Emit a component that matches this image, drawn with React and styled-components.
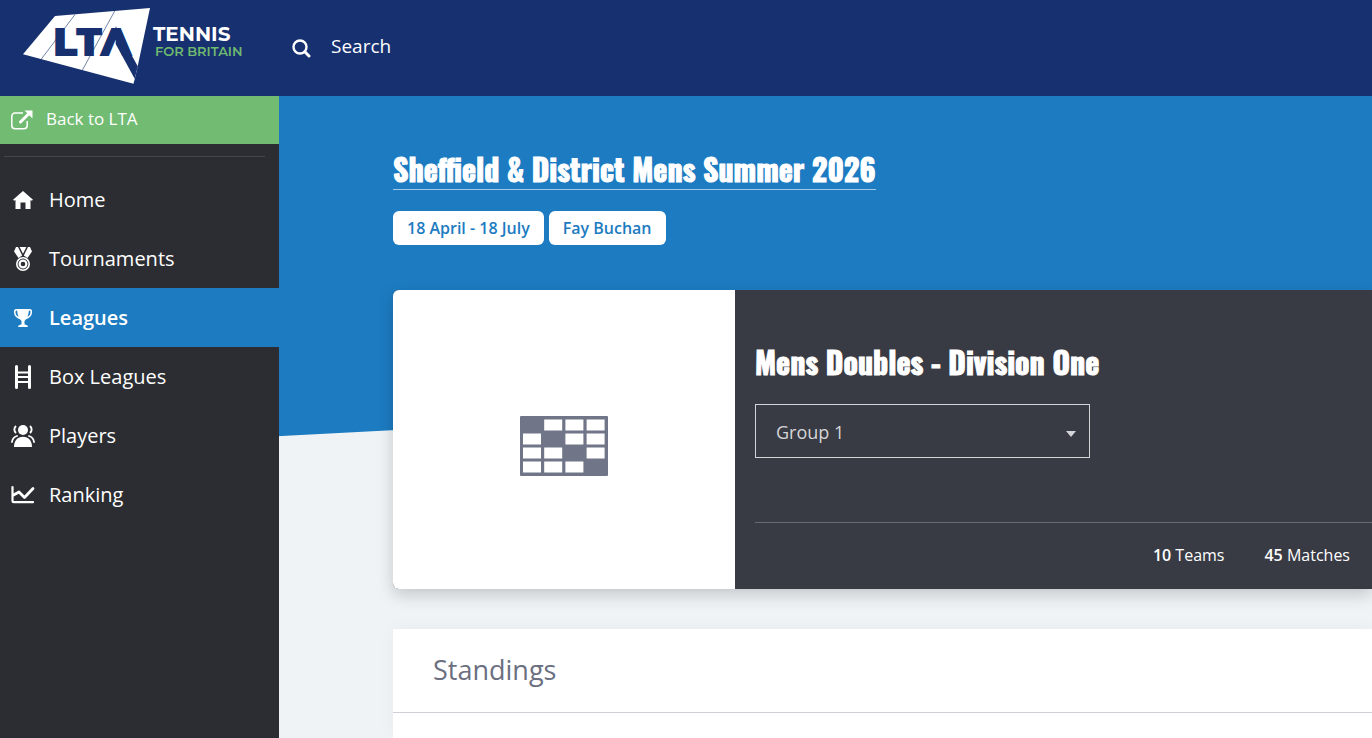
import React from "react";
import styled, { createGlobalStyle } from "styled-components";

const navItems = [
  { label: "Home", icon: HomeIcon },
  { label: "Tournaments", icon: MedalIcon },
  { label: "Leagues", icon: TrophyIcon, active: true },
  { label: "Box Leagues", icon: LadderIcon },
  { label: "Players", icon: PlayersIcon },
  { label: "Ranking", icon: ChartIcon },
];

function App() {
  return (
    <>
      <GlobalStyle />
      <Page>
        <Header>
          <LogoLink href="#" aria-label="LTA Tennis for Britain">
            <Logo />
          </LogoLink>
          <SearchButton type="button">
            <SearchIcon />
            <Label>Search</Label>
          </SearchButton>
        </Header>
        <Body>
          <Sidebar>
            <BackLink href="#">
              <ExternalIcon />
              <Label>Back to LTA</Label>
            </BackLink>
            <Divider />
            <nav>
              <NavList>
                {navItems.map(({ label, icon: Icon, active }) => (
                  <li key={label}>
                    <NavLink href="#" $active={active} aria-current={active ? "page" : undefined}>
                      <Icon />
                      {label}
                    </NavLink>
                  </li>
                ))}
              </NavList>
            </nav>
          </Sidebar>
          <Main>
            <Title>
              <TitleLink href="#">Sheffield &amp; District Mens Summer 2026</TitleLink>
            </Title>
            <Tags>
              <Tag>18 April - 18 July</Tag>
              <Tag>Fay Buchan</Tag>
            </Tags>
            <DrawCard>
              <Media>
                <GridIcon />
              </Media>
              <Details>
                <DrawTitle>Mens Doubles - Division One</DrawTitle>
                <SelectWrap>
                  <Select aria-label="Group" defaultValue="1">
                    <option value="1">Group 1</option>
                  </Select>
                  <Caret viewBox="0 0 10 6">
                    <path d="M0 0h10L5 6z" />
                  </Caret>
                </SelectWrap>
                <Stats>
                  <li>
                    <StatValue>10</StatValue> Teams
                  </li>
                  <li>
                    <StatValue>45</StatValue> Matches
                  </li>
                </Stats>
              </Details>
            </DrawCard>
            <Panel>
              <PanelTitle>Standings</PanelTitle>
            </Panel>
          </Main>
        </Body>
      </Page>
    </>
  );
}

function Logo() {
  return (
    <svg width="250" height="96" viewBox="0 0 250 96">
      <path fill="#fff" d="M23 54.3 55 16 150 8 137.7 66.3 134.8 78.7 133.5 83.7z" />
      <path fill="#17306f" d="M115.7 26 137.7 66.3 134.7 78.7 115.7 44z" />
      <g stroke="#17306f" strokeWidth="0.6">
        <path d="M75 14.5 41 59.5" />
        <path d="M114.7 11 82.3 70.3" />
      </g>
      <LogoLetters x="53" y="56">L</LogoLetters>
      <LogoLetters x="76" y="56">T</LogoLetters>
      <LogoLetters x="116" y="56" textAnchor="middle">Λ</LogoLetters>
      <LogoName x="153" y="41">TENNIS</LogoName>
      <LogoTag x="155" y="56">FOR BRITAIN</LogoTag>
    </svg>
  );
}

function SearchIcon() {
  return (
    <svg width="19" height="19" viewBox="0 0 19 19" fill="none" stroke="#fff">
      <circle cx="8" cy="8" r="6.5" strokeWidth="2.4" />
      <path d="M12.8 12.8 17 17" strokeWidth="3" strokeLinecap="round" />
    </svg>
  );
}

function ExternalIcon() {
  return (
    <svg width="22" height="20" viewBox="0 0 22 20" fill="none" stroke="#fff">
      <path d="M12 3H4A3.2 3.2 0 0 0 .8 6.2V15.5A3.2 3.2 0 0 0 4 18.7H13A3.2 3.2 0 0 0 16.2 15.5V11" strokeWidth="1.5" />
      <path d="M9.5 12 17 4.5" strokeWidth="3" strokeLinecap="round" />
      <path d="M13.5.5H21.5V8.5z" fill="#fff" stroke="none" />
    </svg>
  );
}

function HomeIcon() {
  return (
    <svg width="24" height="24" viewBox="0 0 24 24" fill="#fff">
      <path d="M12 3 22 11.8 20.8 12.8 19.5 12V21H14.5V14.5H9.5V21H4.5V12L3.2 12.8 2 11.8z" />
    </svg>
  );
}

function MedalIcon() {
  return (
    <svg width="24" height="24" viewBox="0 0 24 24" fill="none" stroke="#fff">
      <path
        fill="#fff"
        stroke="none"
        d="M5 0H7L11.2 8.6 7.5 11 3 4.5zM19 0H17L12.8 8.6 16.5 11 21 4.5zM8.6 0H15.4L12 6.8z"
      />
      <circle cx="12" cy="17" r="6.2" strokeWidth="1.6" />
      <circle cx="12" cy="17" r="3.4" strokeWidth="2.2" />
    </svg>
  );
}

function TrophyIcon() {
  return (
    <svg width="24" height="24" viewBox="0 0 24 24" fill="#fff">
      <path d="M6 3H18C17.8 8.5 16.5 12.5 13.5 15V18.3L16.8 19.8V21H7.2V19.8L10.5 18.3V15C7.5 12.5 6.2 8.5 6 3z" />
      <path
        fill="none"
        stroke="#fff"
        strokeWidth="1.6"
        d="M6.8 4.3C5 3 3.4 4 3.7 6.5 4 9.5 6.5 11.5 9 12.5M17.2 4.3C19 3 20.6 4 20.3 6.5 20 9.5 17.5 11.5 15 12.5"
      />
    </svg>
  );
}

function LadderIcon() {
  return (
    <svg width="24" height="24" viewBox="0 0 24 24" fill="none" stroke="#fff">
      <path d="M5.5 1.5V22.5M18.5 1.5V22.5" strokeWidth="3" strokeLinecap="round" />
      <path d="M5.5 7.5H18.5M5.5 12H18.5M5.5 17H18.5" strokeWidth="2" />
    </svg>
  );
}

function PlayersIcon() {
  return (
    <svg width="24" height="24" viewBox="0 0 24 24" fill="none" stroke="#fff">
      <g fill="#fff" stroke="none">
        <circle cx="12" cy="6" r="5" />
        <path d="M3 23C3 16.5 6.5 12.7 12 12.7S21 16.5 21 23z" />
      </g>
      <path strokeWidth="1.9" d="M5 2C2.8 4 2.8 7 5 9M19 2C21.2 4 21.2 7 19 9" />
      <path strokeWidth="1.8" strokeLinecap="round" d="M6 12C3 13 1.3 15 1 18M18 12C21 13 22.7 15 23 18" />
    </svg>
  );
}

function ChartIcon() {
  return (
    <svg width="24" height="24" viewBox="0 0 24 24" fill="none" stroke="#fff" strokeLinecap="round">
      <path d="M1.5 4V18Q1.5 19.2 2.7 19.2H22" strokeWidth="2.2" />
      <path d="M2.5 12 8 9 13.5 14.5 22 5.5" strokeWidth="2.8" strokeLinejoin="round" />
    </svg>
  );
}

// league grid, the diagonal cells stay filled
function GridIcon() {
  const cells = [0, 1, 2, 3];
  return (
    <svg width="90" height="62" viewBox="0 0 90 62">
      <rect x="1" y="1" width="88" height="60" rx="1" fill="#707688" />
      {cells.map((row) =>
        cells
          .filter((col) => col !== row)
          .map((col) => (
            <rect key={`${row}-${col}`} x={4 + col * 21.2} y={4.5 + row * 14} width="18" height="11" fill="#fff" />
          ))
      )}
    </svg>
  );
}

const GlobalStyle = createGlobalStyle`
  * {
    box-sizing: border-box;
  }

  body {
    margin: 0;
    overflow: hidden;
    font-family: "Open Sans", sans-serif;
    color: #fff;
    background-color: #eff3f6;
  }

  a {
    color: inherit;
    text-decoration: none;
  }

  ul {
    list-style: none;
    margin: 0;
    padding: 0;
  }

  svg {
    display: block;
    flex-shrink: 0;
  }
`;

const Page = styled.div`
  display: flex;
  flex-direction: column;
  min-height: 100vh;
`;

const Header = styled.header`
  display: flex;
  align-items: center;
  gap: 42px;
  background-color: #17306f;
`;

const LogoLink = styled.a`
  display: block;
`;

const LogoLetters = styled.text`
  font-family: Montserrat, Inter, sans-serif;
  font-size: 40px;
  font-weight: 900;
  fill: #17306f;
`;

const LogoName = styled.text`
  font-family: Montserrat, Lato, sans-serif;
  font-size: 20px;
  font-weight: 700;
  fill: #fff;
`;

const LogoTag = styled.text`
  font-family: Montserrat, Lato, sans-serif;
  font-size: 13px;
  font-weight: 600;
  fill: #6fba70;
`;

const SearchButton = styled.button`
  display: flex;
  align-items: center;
  gap: 20px;
  padding: 0;
  border: none;
  background: none;
  color: #fff;
  font-family: inherit;
  font-size: 19px;
`;

const Label = styled.span`
  padding-bottom: 4px;
`;

const Body = styled.div`
  display: flex;
  flex: 1;
`;

const Sidebar = styled.aside`
  flex: 0 0 279px;
  background-color: #2c2d32;
`;

const BackLink = styled.a`
  display: flex;
  align-items: center;
  gap: 13px;
  height: 48px;
  padding: 0 11px;
  background-color: #71bb72;
  font-size: 17px;
`;

const Divider = styled.hr`
  margin: 12px 14px 13px 4px;
  border: none;
  border-top: 1px solid #44464f;
`;

const NavList = styled.ul`
  display: flex;
  flex-direction: column;
`;

const NavLink = styled.a`
  display: flex;
  align-items: center;
  gap: 14px;
  height: 59px;
  padding: 0 11px;
  font-size: 20px;
  font-weight: ${({ $active }) => ($active ? 600 : 400)};
  background-color: ${({ $active }) => ($active ? "#1c7bc1" : "transparent")};
`;

const Main = styled.main`
  flex: 1;
  display: flex;
  flex-direction: column;
  min-width: 0;
  padding: 56px 0 0 114px;
  background: linear-gradient(177deg, #1c7bc1 50%, #eff3f6 calc(50% + 1px)) no-repeat;
  background-size: 100% 622px;
`;

const Heading = styled.h1`
  margin: 0;
  font-family: Oswald, "Roboto Condensed", sans-serif;
  font-size: 30px;
  font-weight: 700;
  line-height: 33px;
  -webkit-text-stroke: 1px #fff;
`;

const Title = styled(Heading)`
  display: flex;
`;

const TitleLink = styled.a`
  padding-bottom: 4px;
  border-bottom: 1px solid #a4cae6;
`;

const Tags = styled.div`
  display: flex;
  gap: 5px;
  margin-top: 21px;
`;

const Tag = styled.span`
  padding: 0 14px;
  border-radius: 6px;
  background-color: #fff;
  color: #1c7bc1;
  font-size: 16px;
  font-weight: 600;
  line-height: 34px;
`;

const DrawCard = styled.section`
  display: flex;
  margin-top: 45px;
  border-radius: 6px 0 0 6px;
  background-color: #393b44;
  box-shadow: 0 6px 16px rgba(0, 0, 0, 0.18);
`;

const Media = styled.div`
  display: flex;
  align-items: center;
  justify-content: center;
  flex: 0 0 342px;
  padding-top: 12px;
  border-radius: 6px 0 0 6px;
  background-color: #fff;
`;

const Details = styled.div`
  flex: 1;
  padding: 55px 0 0 20px;
`;

const DrawTitle = styled(Heading).attrs({ as: "h2" })``;

const SelectWrap = styled.div`
  position: relative;
  width: 335px;
  margin-top: 26px;
`;

const Select = styled.select`
  display: block;
  appearance: none;
  width: 100%;
  height: 54px;
  padding: 2px 20px 0;
  border: 1px solid #d4d5d8;
  border-radius: 0;
  background: none;
  color: #d4d5d8;
  font-family: inherit;
  font-size: 18px;
`;

const Caret = styled.svg`
  position: absolute;
  top: 27px;
  right: 14px;
  width: 10px;
  fill: #d4d5d8;
  pointer-events: none;
`;

const Stats = styled.ul`
  display: flex;
  justify-content: flex-end;
  gap: 40px;
  margin-top: 64px;
  padding: 0 22px 2px 0;
  border-top: 1px solid #666a7a;
  font-size: 16px;
  line-height: 64px;
`;

const StatValue = styled.span`
  font-weight: 600;
`;

const Panel = styled.section`
  flex: 1;
  margin-top: 40px;
  background-color: #fff;
  box-shadow: 0 0 16px rgba(0, 0, 0, 0.04);
`;

const PanelTitle = styled.h3`
  margin: 0;
  padding: 0 40px 2px;
  border-bottom: 1px solid #cfd0d6;
  color: #6b6f7f;
  font-size: 27px;
  font-weight: 400;
  line-height: 81px;
`;

export default App;
